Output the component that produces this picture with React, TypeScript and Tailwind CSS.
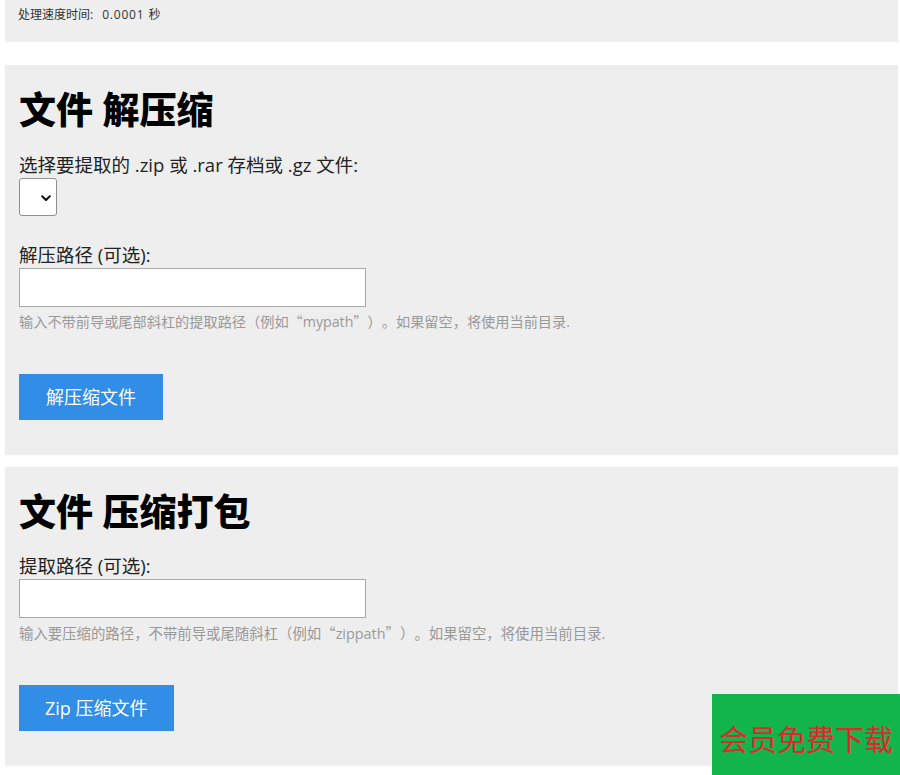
import React from "react";

function FakeSelect() {
  return (
    <div className="relative w-[38px] h-[38px] bg-white border border-[#8f8f8f] rounded-[3px]">
      <svg
        className="absolute left-[21px] top-[16px]"
        width="10"
        height="7"
        viewBox="0 0 10 7"
        fill="none"
      >
        <path d="M1.2 1.2 L5 5 L8.8 1.2" stroke="#111" strokeWidth="2" strokeLinecap="round" strokeLinejoin="round" />
      </svg>
    </div>
  );
}

function TextBox() {
  return <div className="w-[347px] h-[39px] bg-white border border-[#a9a9a9]" />;
}

function Q({ children }: { children: React.ReactNode }) {
  return <span className="font-['Noto_Sans_CJK_SC',sans-serif]">{children}</span>;
}

export default function App() {
  return (
    <div className="min-h-[775px] bg-white font-['Open_Sans','Noto_Sans_CJK_SC',sans-serif] text-[#222] [text-spacing-trim:space-all]">
      {/* speed panel */}
      <div className="ml-[5px] mr-[2px] bg-[#eeeeee] pl-[13px] pt-[6px] pb-[17px] shadow-[0_1px_1px_rgba(0,0,0,0.06)]">
        <div className="h-[18px] text-[12px] leading-[18px] text-[#333] whitespace-nowrap">
          处理速度时间:<span className="ml-[9px] tracking-[0.8px]">0.0001</span>
          <span className="ml-[4px]">秒</span>
        </div>
      </div>

      {/* extract panel */}
      <div className="mt-[24px] ml-[5px] mr-[2px] bg-[#eeeeee] pl-[14px] pt-[23px] pb-[34px] shadow-[0_1px_1px_rgba(0,0,0,0.06)]">
        <h1 className="h-[44px] text-[37px] leading-[44px] font-black text-black">文件 解压缩</h1>
        <div className="mt-[19px] h-[27px] text-[18.5px] leading-[27px]">选择要提取的 .zip 或 .rar 存档或 .gz 文件:</div>
        <FakeSelect />
        <div className="mt-[25px] h-[27px] text-[18.5px] leading-[27px]">解压路径 (可选):</div>
        <TextBox />
        <div className="mt-[4px] h-[21px] text-[14.2px] leading-[21px] text-[#999] whitespace-nowrap">
          输入不带前导或尾部斜杠的提取路径（例如<Q>“</Q>mypath<Q>”</Q>）。如果留空，将使用当前目录.
        </div>
        <div className="mt-[42px] flex">
          <div className="h-[46px] px-[27px] flex items-center bg-[#318de6] text-white text-[18px]">
            解压缩文件
          </div>
        </div>
      </div>

      {/* compress panel */}
      <div className="mt-[13px] ml-[5px] mr-[2px] bg-[#eeeeee] pl-[14px] pt-[23px] pb-[34px] shadow-[0_1px_1px_rgba(0,0,0,0.06)]">
        <h1 className="h-[44px] text-[37px] leading-[44px] font-black text-black">文件 压缩打包</h1>
        <div className="mt-[18px] h-[27px] text-[18.5px] leading-[27px]">提取路径 (可选):</div>
        <TextBox />
        <div className="mt-[4px] h-[21px] text-[14.4px] leading-[21px] text-[#999] whitespace-nowrap">
          输入要压缩的路径，不带前导或尾随斜杠（例如<Q>“</Q>zippath<Q>”</Q>）。如果留空，将使用当前目录.
        </div>
        <div className="mt-[42px] flex">
          <div className="h-[46px] px-[26px] flex items-center bg-[#318de6] text-white text-[18px]">
            Zip 压缩文件
          </div>
        </div>
      </div>

      {/* floating green badge */}
      <div className="fixed right-0 bottom-0 w-[188px] h-[81px] bg-[#12b54b] pt-[24px] pl-[7px] text-[29px] leading-[44px] text-[#e3262c] whitespace-nowrap">
        会员免费下载
      </div>
    </div>
  );
}
